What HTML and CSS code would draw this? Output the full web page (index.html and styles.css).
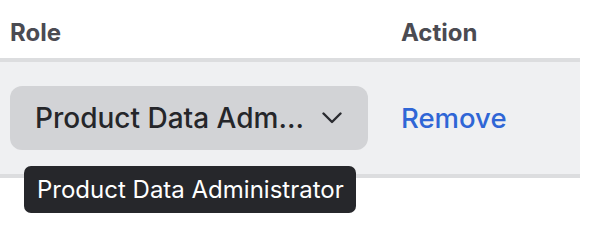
FILE: index.html
```html
<!DOCTYPE html>
<html lang="en">
<head>
  <meta charset="UTF-8">
  <meta name="viewport" content="width=device-width, initial-scale=1.0">
  <title>Members</title>
  <link rel="stylesheet" href="styles.css">
</head>
<body>
  <div class="members">
    <div class="row head">
      <div class="cell">Role</div>
      <div class="cell">Action</div>
    </div>
    <div class="row item">
      <div class="cell">
        <div class="role-select">
          <button class="select">
            <span class="select-label">Product Data Administrator</span>
            <svg class="chevron" width="20" height="12" viewBox="0 0 20 12" fill="none">
              <path d="M1.5 1.5 L10 10 L18.5 1.5" stroke="currentColor" stroke-width="2.4" stroke-linecap="round" stroke-linejoin="round"/>
            </svg>
          </button>
          <div class="tooltip">Product Data Administrator</div>
        </div>
      </div>
      <div class="cell">
        <a class="remove" href="#">Remove</a>
      </div>
    </div>
  </div>
</body>
</html>
```

FILE: styles.css
```css
/* Base */
html, body {
  min-height: 232px;
}

body {
  margin: 0;
  background: #ffffff;
  font-family: Inter, "Noto Sans", sans-serif;
  color: #25262a;
}

.members {
  width: 580px;
}

.row {
  display: grid;
  grid-template-columns: 391px 1fr;
}

.cell {
  padding-left: 10px;
}

/* Header */
.head {
  height: 58px;
  align-items: start;
}

.head .cell {
  padding-top: 19px;
  padding-left: 10px;
  font-weight: 700;
  font-size: 24px;
  line-height: 28px;
  color: #4b4b52;
}

/* Member row */
.item {
  background-color: #eff0f2;
  border-top: 4px solid #dcdddf;
  border-bottom: 4px solid #dcdddf;
  padding: 24px 0;
  align-items: center;
}

.role-select {
  position: relative;
  width: 358px;
}

.select {
  display: flex;
  align-items: center;
  justify-content: space-between;
  width: 100%;
  height: 64px;
  padding: 0 26px 0 25px;
  border: none;
  border-radius: 12px;
  background-color: #d2d3d6;
  color: #25262a;
  font-family: inherit;
  font-size: 28px;
  font-weight: 500;
  cursor: pointer;
}

.select-label {
  max-width: 272px;
  overflow: hidden;
  white-space: nowrap;
  text-overflow: ellipsis;
}

.chevron {
  flex-shrink: 0;
  color: #2a2b30;
}

.remove {
  font-size: 27.5px;
  font-weight: 500;
  color: #2f66d6;
  text-decoration: none;
}

/* Tooltip */
.tooltip {
  position: absolute;
  z-index: 10;
  left: 14px;
  top: 80px;
  height: 47px;
  box-sizing: border-box;
  padding: 0 12px 0 13px;
  display: flex;
  align-items: center;
  border-radius: 7px;
  background-color: #26272b;
  color: #ffffff;
  font-size: 24px;
  white-space: nowrap;
}
```
